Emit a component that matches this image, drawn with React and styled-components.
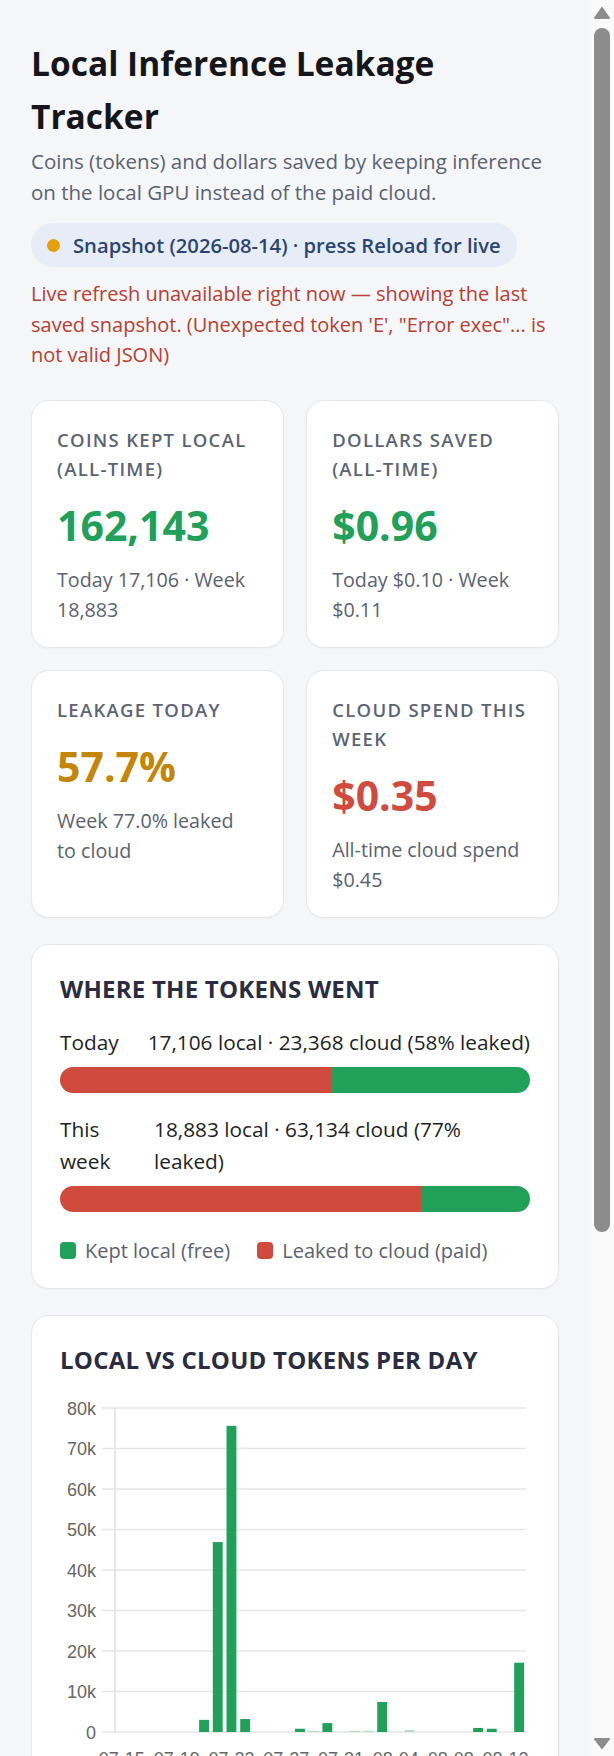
import React from 'react';
import styled, { createGlobalStyle } from 'styled-components';

const GREEN = '#21a05a';
const RED = '#d14a3e';
const AMBER = '#c58506';
const RAIL = '#fafafa';
const THUMB = '#8c8c8c';

// share of the document that fits in the window, sets the thumb length
const VISIBLE_SHARE = 0.708;

const GlobalStyle = createGlobalStyle`
  html, body {
    margin: 0;
    padding: 0;
  }

  body {
    background: #f5f6f8;
    font-family: "Open Sans", "Noto Sans", sans-serif;
    color: #1d1f24;
  }
`;

const DAILY = [
  0, 0, 0, 0, 0, 0, 3000, 46900, 75600, 3200,
  0, 0, 0, 800, 250, 2200, 0, 300, 320, 7400,
  0, 500, 0, 0, 0, 0, 1000, 800, 0, 17106,
];
const PARTIAL = new Set([14, 17, 18, 21]);

const dayLabel = (i) => {
  const d = new Date(2026, 6, 15 + i);
  const mm = String(d.getMonth() + 1).padStart(2, '0');
  const dd = String(d.getDate()).padStart(2, '0');
  return `${mm}-${dd}`;
};

const fmt = (n) => n.toLocaleString('en-US');

const SPLITS = [
  { label: 'Today', local: 17106, cloud: 23368 },
  { label: 'This week', local: 18883, cloud: 63134 },
];

export default function App() {
  return (
    <>
      <GlobalStyle />
      <Shell>
        <Page>
          <Title>Local Inference Leakage Tracker</Title>
          <Subtitle>
            Coins (tokens) and dollars saved by keeping inference on the local GPU
            instead of the paid cloud.
          </Subtitle>

          <StatusPill>
            <StatusDot />
            Snapshot (2026-08-14) · press Reload for live
          </StatusPill>

          <ErrorNote>
            Live refresh unavailable right now — showing the last saved snapshot.
            (Unexpected token 'E', "Error exec"... is not valid JSON)
          </ErrorNote>

          <StatGrid>
            <StatCard>
              <StatLabel>Coins kept local (all-time)</StatLabel>
              <StatValue $tone={GREEN}>162,143</StatValue>
              <StatSub>Today 17,106 · Week 18,883</StatSub>
            </StatCard>
            <StatCard>
              <StatLabel>Dollars saved (all-time)</StatLabel>
              <StatValue $tone={GREEN}>$0.96</StatValue>
              <StatSub>Today $0.10 · Week $0.11</StatSub>
            </StatCard>
            <StatCard>
              <StatLabel>Leakage today</StatLabel>
              <StatValue $tone={AMBER}>57.7%</StatValue>
              <StatSub>Week 77.0% leaked to cloud</StatSub>
            </StatCard>
            <StatCard>
              <StatLabel>Cloud spend this week</StatLabel>
              <StatValue $tone={RED}>$0.35</StatValue>
              <StatSub>All-time cloud spend $0.45</StatSub>
            </StatCard>
          </StatGrid>

          <Panel>
            <PanelTitle>Where the tokens went</PanelTitle>
            <SplitList>
              {SPLITS.map((s) => {
                const leaked = (s.cloud / (s.local + s.cloud)) * 100;
                const summary = `${fmt(s.local)} local · ${fmt(s.cloud)} cloud (${Math.round(leaked)}% leaked)`;
                return (
                  <SplitItem key={s.label}>
                    <SplitRow>
                      <SplitLabel>{s.label}</SplitLabel>
                      <span>{summary}</span>
                    </SplitRow>
                    <SplitBar>
                      <Segment $color={RED} style={{ width: `${leaked}%` }} />
                      <Segment $color={GREEN} style={{ width: `${100 - leaked}%` }} />
                    </SplitBar>
                  </SplitItem>
                );
              })}
            </SplitList>
            <Legend>
              <LegendItem>
                <Swatch $color={GREEN} />
                Kept local (free)
              </LegendItem>
              <LegendItem>
                <Swatch $color={RED} />
                Leaked to cloud (paid)
              </LegendItem>
            </Legend>
          </Panel>

          <Panel>
            <PanelTitle>Local vs cloud tokens per day</PanelTitle>
            <DailyChart values={DAILY} />
          </Panel>
        </Page>

        <ScrollRail aria-hidden="true">
          <RailButton>
            <svg width="24" height="24" viewBox="0 0 24 24">
              <polygon points="5,18 12,8 19,18" fill={THUMB} stroke={THUMB} strokeWidth="2" strokeLinejoin="round" />
            </svg>
          </RailButton>
          <RailTrack>
            <RailThumb style={{ height: `${VISIBLE_SHARE * 100}%` }} />
          </RailTrack>
          <RailButton>
            <svg width="24" height="24" viewBox="0 0 24 24">
              <polygon points="5,7 12,16 19,7" fill={THUMB} stroke={THUMB} strokeWidth="2" strokeLinejoin="round" />
            </svg>
          </RailButton>
        </ScrollRail>
      </Shell>
    </>
  );
}

const CHART = { width: 472, height: 400, left: 55, right: 466, top: 19, bottom: 343, max: 80000 };
const Y_TICKS = [0, 10000, 20000, 30000, 40000, 50000, 60000, 70000, 80000];

function DailyChart({ values }) {
  const slot = (CHART.right - CHART.left) / values.length;
  const barW = slot * 0.72;
  const y = (v) => CHART.bottom - (v / CHART.max) * (CHART.bottom - CHART.top);

  return (
    <ChartSvg width={CHART.width} height={CHART.height} viewBox={`0 0 ${CHART.width} ${CHART.height}`}>
      {Y_TICKS.map((t) => (
        <g key={t}>
          <line x1={42} x2={CHART.right} y1={y(t)} y2={y(t)} stroke="#e6e6e6" strokeWidth="1.5" />
          <text x={36} y={y(t) + 6.5} textAnchor="end">
            {t === 0 ? '0' : `${t / 1000}k`}
          </text>
        </g>
      ))}
      <line x1={CHART.left} x2={CHART.left} y1={CHART.top} y2={CHART.bottom} stroke="#e0e0e0" strokeWidth="1.5" />
      {values.map((v, i) =>
        v > 0 ? (
          <rect
            key={i}
            x={CHART.left + slot * i + (slot - barW) / 2}
            y={y(v)}
            width={barW}
            height={CHART.bottom - y(v)}
            fill={PARTIAL.has(i) ? '#b5dfc5' : GREEN}
          />
        ) : null
      )}
      {values.map((_, i) =>
        i % 4 === 0 ? (
          <text key={`l${i}`} x={CHART.left + slot * (i + 0.5)} y={375.5} textAnchor="middle">
            {dayLabel(i)}
          </text>
        ) : null
      )}
    </ChartSvg>
  );
}

const Shell = styled.div`
  display: flex;
  align-items: flex-start;
`;

const Page = styled.main`
  flex: 1;
  min-width: 0;
  display: flex;
  flex-direction: column;
  padding: 37px 31px 40px;
`;

const ScrollRail = styled.aside`
  position: sticky;
  top: 0;
  flex: 0 0 24px;
  height: 100vh;
  display: flex;
  flex-direction: column;
  background: ${RAIL};
`;

const RailButton = styled.div`
  height: 24px;
  flex-shrink: 0;

  svg {
    display: block;
  }
`;

const RailTrack = styled.div`
  flex: 1;
  padding: 4px;
`;

const RailThumb = styled.div`
  border-radius: 8px;
  background: ${THUMB};
`;

const Title = styled.h1`
  margin: 0;
  font-size: 33.5px;
  line-height: 53px;
  font-weight: 700;
  color: #14161b;
`;

const Subtitle = styled.p`
  margin: 3px 0 0;
  font-size: 20.5px;
  line-height: 31px;
  color: #5b6270;
`;

const StatusPill = styled.div`
  align-self: flex-start;
  display: inline-flex;
  align-items: center;
  gap: 13px;
  margin-top: 15px;
  padding: 8px 16px;
  border-radius: 999px;
  background: #e7edf7;
  color: #2b4470;
  font-size: 20.2px;
  font-weight: 600;
  line-height: 28px;
`;

const StatusDot = styled.span`
  width: 13px;
  height: 13px;
  border-radius: 50%;
  background: #e3a008;
  flex-shrink: 0;
`;

const ErrorNote = styled.p`
  margin: 12px 0 0;
  font-size: 20px;
  line-height: 30.5px;
  color: #b83d33;
`;

const StatGrid = styled.section`
  display: grid;
  grid-template-columns: 1fr 1fr;
  gap: 22.4px;
  margin-top: 29.5px;
`;

const StatCard = styled.div`
  background: #ffffff;
  border: 1px solid #e6e8ec;
  border-radius: 18px;
  padding: 24px 29px 22px 25px;
  box-shadow: 0 1px 2px rgba(16, 24, 40, 0.03);
`;

const StatLabel = styled.div`
  font-size: 18.5px;
  line-height: 29px;
  font-weight: 600;
  letter-spacing: 0.07em;
  text-transform: uppercase;
  color: #5b6473;
`;

const StatValue = styled.div`
  margin-top: 16px;
  font-size: 41px;
  line-height: 52px;
  font-weight: 700;
  color: ${(props) => props.$tone};
`;

const StatSub = styled.div`
  margin-top: 14px;
  font-size: 19.7px;
  line-height: 30px;
  color: #5b6270;
`;

const Panel = styled.section`
  margin-top: 26px;
  background: #ffffff;
  border: 1px solid #e6e8ec;
  border-radius: 18px;
  padding: 27px 28px 22.5px;
  box-shadow: 0 1px 2px rgba(16, 24, 40, 0.03);
`;

const PanelTitle = styled.h2`
  margin: 0 0 12px;
  font-size: 24px;
  line-height: 34px;
  font-weight: 700;
  letter-spacing: 0.01em;
  text-transform: uppercase;
  color: #2a2c3f;
`;

const SplitList = styled.div`
  display: flex;
  flex-direction: column;
  gap: 21.5px;
  margin-top: 20.5px;
`;

const SplitItem = styled.div`
  display: flex;
  flex-direction: column;
  gap: 8.5px;
`;

const SplitRow = styled.div`
  display: flex;
  justify-content: space-between;
  gap: 12px;
  font-size: 20.8px;
  line-height: 31.5px;
  color: #1d1f24;
`;

const SplitLabel = styled.span`
  max-width: 82px;
`;

const SplitBar = styled.div`
  display: flex;
  height: 26px;
  border-radius: 13px;
  overflow: hidden;
`;

const Segment = styled.div`
  height: 100%;
  background: ${(props) => props.$color};
`;

const Legend = styled.div`
  display: flex;
  gap: 27px;
  margin-top: 23px;
  font-size: 20px;
  line-height: 31px;
  color: #5b6270;
`;

const LegendItem = styled.span`
  display: inline-flex;
  align-items: center;
  gap: 9px;
`;

const Swatch = styled.span`
  width: 16px;
  height: 17px;
  border-radius: 4px;
  background: ${(props) => props.$color};
`;

const ChartSvg = styled.svg`
  display: block;

  text {
    font-family: "Liberation Sans", Arial, sans-serif;
    font-size: 18px;
    fill: #666666;
  }
`;
